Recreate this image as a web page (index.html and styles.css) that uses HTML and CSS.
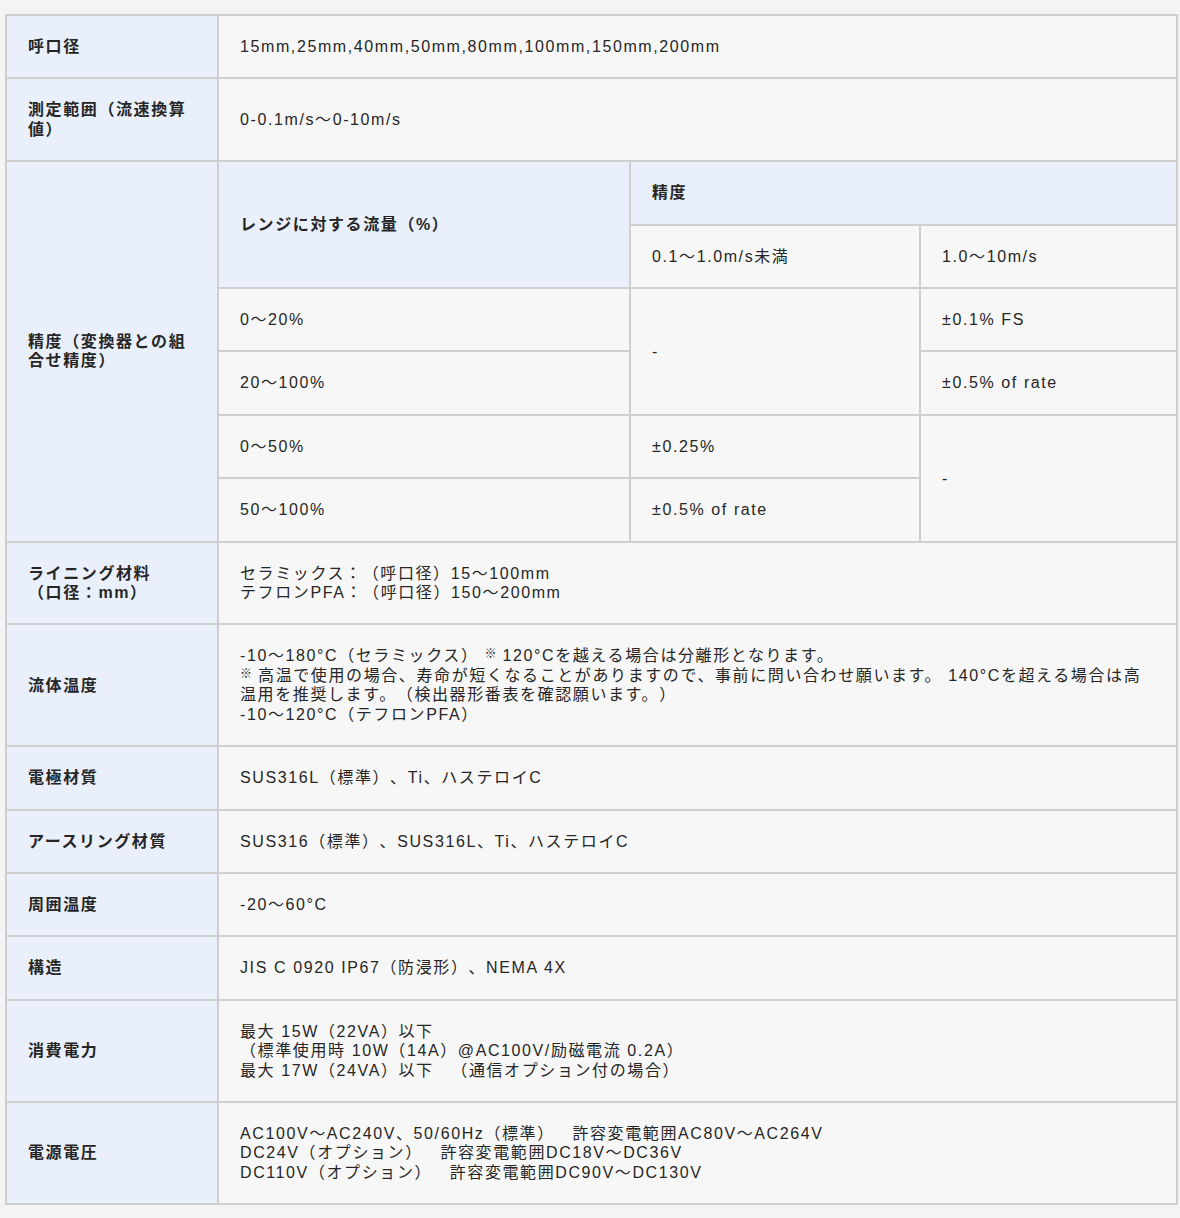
FILE: index.html
```html
<!DOCTYPE html>
<html lang="ja">
<head>
<meta charset="utf-8">
<title>仕様</title>
<link rel="stylesheet" href="styles.css">
</head>
<body>
<div class="wrap">
<table class="spec">
  <colgroup>
    <col class="c-label">
    <col class="c-range">
    <col class="c-low">
    <col class="c-high">
  </colgroup>
  <tbody>
    <tr>
      <th class="label">呼口径</th>
      <td colspan="3">15mm,25mm,40mm,50mm,80mm,100mm,150mm,200mm</td>
    </tr>
    <tr>
      <th class="label">測定範囲（流速換算値）</th>
      <td colspan="3">0-0.1m/s〜0-10m/s</td>
    </tr>
    <tr>
      <th class="label" rowspan="6">精度（変換器との組合せ精度）</th>
      <th class="sub" rowspan="2">レンジに対する流量（%）</th>
      <th class="sub" colspan="2">精度</th>
    </tr>
    <tr>
      <td>0.1〜1.0m/s未満</td>
      <td>1.0〜10m/s</td>
    </tr>
    <tr>
      <td>0〜20%</td>
      <td rowspan="2">-</td>
      <td>±0.1% FS</td>
    </tr>
    <tr>
      <td>20〜100%</td>
      <td>±0.5% of rate</td>
    </tr>
    <tr>
      <td>0〜50%</td>
      <td>±0.25%</td>
      <td rowspan="2">-</td>
    </tr>
    <tr>
      <td>50〜100%</td>
      <td>±0.5% of rate</td>
    </tr>
    <tr>
      <th class="label">ライニング材料<br>（口径：mm）</th>
      <td colspan="3">セラミックス：（呼口径）15〜100mm<br>テフロンPFA：（呼口径）150〜200mm</td>
    </tr>
    <tr>
      <th class="label">流体温度</th>
      <td colspan="3">-10〜180°C（セラミックス） <span class="note">※</span> 120°Cを越える場合は分離形となります。<br><span class="note">※</span> 高温で使用の場合、寿命が短くなることがありますので、事前に問い合わせ願います。 140°Cを超える場合は高温用を推奨します。（検出器形番表を確認願います。）<br>-10〜120°C（テフロンPFA）</td>
    </tr>
    <tr>
      <th class="label">電極材質</th>
      <td colspan="3">SUS316L（標準）、Ti、ハステロイC</td>
    </tr>
    <tr>
      <th class="label">アースリング材質</th>
      <td colspan="3">SUS316（標準）、SUS316L、Ti、ハステロイC</td>
    </tr>
    <tr>
      <th class="label">周囲温度</th>
      <td colspan="3">-20〜60°C</td>
    </tr>
    <tr>
      <th class="label">構造</th>
      <td colspan="3">JIS C 0920 IP67（防浸形）、NEMA 4X</td>
    </tr>
    <tr>
      <th class="label">消費電力</th>
      <td colspan="3">最大 15W（22VA）以下<br>（標準使用時 10W（14A）@AC100V/励磁電流 0.2A）<br>最大 17W（24VA）以下　（通信オプション付の場合）</td>
    </tr>
    <tr>
      <th class="label">電源電圧</th>
      <td colspan="3">AC100V〜AC240V、50/60Hz（標準）　許容変電範囲AC80V〜AC264V<br>DC24V（オプション）　許容変電範囲DC18V〜DC36V<br>DC110V（オプション）　許容変電範囲DC90V〜DC130V</td>
    </tr>
  </tbody>
</table>
</div>
</body>
</html>
```
FILE: styles.css
```css
html, body {
  margin: 0;
  padding: 0;
  background: #f4f4f4;
}

.wrap {
  padding: 14px 4px 10px 5px;
}

.spec {
  width: 1171px;
  table-layout: fixed;
  border-collapse: collapse;
  font-family: "Liberation Sans", "Noto Sans CJK JP", sans-serif;
  font-size: 16px;
  line-height: 19.4px;
  letter-spacing: 0.1em;
  color: #262626;
  background: #f7f7f7;
  text-spacing-trim: space-all;
}

.c-label { width: 212px; }
.c-range { width: 412px; }
.c-low { width: 290px; }
.c-high { width: 257px; }

.spec th,
.spec td {
  border: 2px solid #cfcfcf;
  padding: 21px 21px;
  text-align: left;
  vertical-align: middle;
}

.spec td {
  font-weight: normal;
  background: #f7f7f7;
}

.spec th {
  font-weight: bold;
  background: #e9f0fb;
}

.note {
  display: inline-block;
  font-size: 12px;
  line-height: 12px;
  letter-spacing: 0;
  vertical-align: 3px;
}
```
